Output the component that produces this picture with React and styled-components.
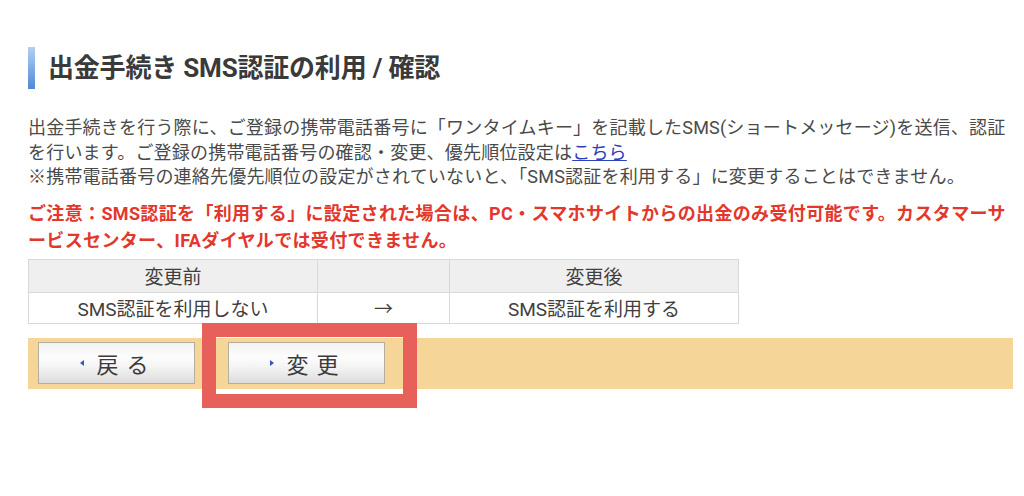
import React from "react";
import styled, { createGlobalStyle } from "styled-components";

const GlobalStyle = createGlobalStyle`
  html, body {
    margin: 0;
    padding: 0;
    background: #ffffff;
  }
  body {
    font-family: "Roboto", "Noto Sans CJK JP", sans-serif;
    color: #444444;
  }
`;

const rows = [
  { before: "SMS認証を利用しない", arrow: "→", after: "SMS認証を利用する" },
];

const App = () => {
  return (
    <>
      <GlobalStyle />
      <Page>
        <Heading>
          <HeadingMark />
          <HeadingText>出金手続き SMS認証の利用 / 確認</HeadingText>
        </Heading>

        <Lead>
          出金手続きを行う際に、ご登録の携帯電話番号に「ワンタイムキー」を記載したSMS(ショートメッセージ)を送信、認証
          <br />
          を行います。ご登録の携帯電話番号の確認・変更、優先順位設定は
          <Link href="#">こちら</Link>
          <br />
          ※携帯電話番号の連絡先優先順位の設定がされていないと、「SMS認証を利用する」に変更することはできません。
        </Lead>

        <Caution>
          ご注意：SMS認証を「利用する」に設定された場合は、PC・スマホサイトからの出金のみ受付可能です。カスタマーサ
          <br />
          ービスセンター、IFAダイヤルでは受付できません。
        </Caution>

        <Table>
          <thead>
            <tr>
              <Th $w={288}>変更前</Th>
              <Th $w={131} />
              <Th $w={288}>変更後</Th>
            </tr>
          </thead>
          <tbody>
            {rows.map((r) => (
              <tr key={r.before}>
                <Td>{r.before}</Td>
                <Td>{r.arrow}</Td>
                <Td>{r.after}</Td>
              </tr>
            ))}
          </tbody>
        </Table>

        <ButtonBar>
          <Button>
            <Bullet $dir="left" />
            戻る
          </Button>
          <Button>
            <Bullet $dir="right" />
            変更
          </Button>
          <Highlight />
        </ButtonBar>
      </Page>
    </>
  );
};
export default App;

const Page = styled.div`
  width: 1024px;
  height: 496px;
  box-sizing: border-box;
  padding: 47px 11px 0 28px;
  overflow: hidden;
`;

const Heading = styled.div`
  display: flex;
  align-items: center;
  gap: 13px;
  height: 42px;
`;

const HeadingMark = styled.div`
  width: 7px;
  height: 42px;
  background: linear-gradient(#b3d0f2, #4f8ad8);
`;

const HeadingText = styled.h1`
  margin: 0;
  font-size: 26px;
  font-weight: 700;
  color: #3a3a3a;
  line-height: 42px;
  letter-spacing: -0.2px;
`;

const Lead = styled.p`
  margin: 27px 0 0;
  font-size: 18px;
  line-height: 24.5px;
  letter-spacing: 0.2px;
  color: #4a4a4a;
  white-space: nowrap;
`;

const Link = styled.a`
  color: #2b3fbf;
  text-decoration: underline;
`;

const Caution = styled.p`
  margin: 10px 0 0;
  font-size: 18px;
  line-height: 27px;
  font-weight: 700;
  letter-spacing: 0.35px;
  color: #e3372c;
  white-space: nowrap;
`;

const Table = styled.table`
  margin-top: 5px;
  border-collapse: collapse;
  table-layout: fixed;
  font-size: 19px;
  color: #3f3f3f;
`;

const Th = styled.th`
  width: ${({ $w }) => $w}px;
  height: 32px;
  padding: 0;
  background: #efefef;
  border: 1px solid #d9d9d9;
  font-weight: 400;
  text-align: center;
`;

const Td = styled.td`
  height: 30px;
  padding: 0;
  border: 1px solid #d9d9d9;
  text-align: center;
`;

const ButtonBar = styled.div`
  position: relative;
  margin-top: 14px;
  width: 985px;
  height: 51px;
  box-sizing: border-box;
  padding: 5px 10px;
  display: flex;
  align-items: center;
  gap: 33px;
  background: #f5d698;
`;

const Button = styled.button`
  width: 157px;
  height: 42px;
  display: flex;
  align-items: center;
  justify-content: center;
  gap: 8px;
  padding: 0 0 0 4px;
  border: 1px solid #b5ae9c;
  background: linear-gradient(#f2f2f2 0%, #fdfdfd 35%, #f4f4f4 60%, #dcdcdc 100%);
  font-family: "Noto Sans CJK JP", sans-serif;
  font-size: 22px;
  letter-spacing: 8px;
  color: #3c3c3c;
  cursor: pointer;
`;

const Bullet = styled.span`
  width: 0;
  height: 0;
  border-top: 3px solid transparent;
  border-bottom: 3px solid transparent;
  ${({ $dir }) =>
    $dir === "left"
      ? "border-right: 4px solid #3b55b5;"
      : "border-left: 4px solid #3b55b5;"}
  margin-right: 4px;
`;

// annotation frame drawn over the 変更 button
const Highlight = styled.div`
  position: absolute;
  left: 174px;
  top: -15px;
  width: 215px;
  height: 85px;
  box-sizing: border-box;
  border: 14px solid #e8605a;
  pointer-events: none;
`;
